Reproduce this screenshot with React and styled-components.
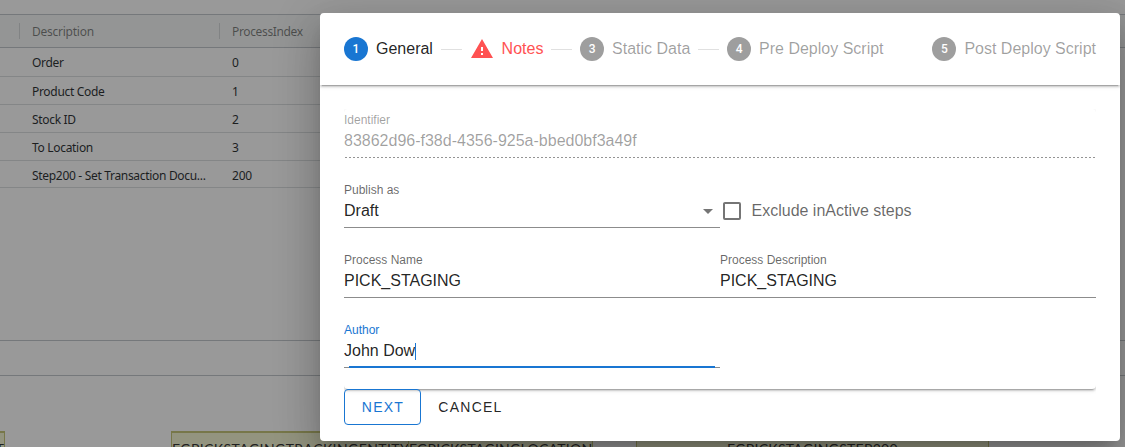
import React from "react";
import styled, { createGlobalStyle } from "styled-components";

const GlobalStyle = createGlobalStyle`
  * { box-sizing: border-box; }
  body { margin: 0; overflow: hidden; background: #fff; font-family: "Liberation Sans", Arial, sans-serif; }
`;

const Page = styled.div`
  position: relative;
  height: 447px;
  overflow: hidden;
  display: flex;
  flex-direction: column;
  background: #fff;
`;

const Grid = styled.section`
  height: 327px;
  margin-top: 14px;
  border: solid #bdc3c7;
  border-width: 1px 0;
  font: 12px/29px "Noto Sans", sans-serif;
  color: #181d1f;
`;

const GridHeader = styled.div`
  display: flex;
  align-items: center;
  height: 33px;
  background: #f5f8f7;
  border-bottom: 1px solid #bdc3c7;
  color: rgba(0, 0, 0, 0.54);
`;

const HeaderCell = styled.div`
  width: ${(p) => p.$width}px;
  height: 16px;
  margin-left: ${(p) => p.$offset || 0}px;
  padding-left: 12px;
  border-left: 1px solid #d3d7d9;
  line-height: 18px;
  letter-spacing: ${(p) => p.$tracking || 0}px;
`;

const GridRow = styled.div`
  display: flex;
  width: 1100px;
  height: ${(p) => p.$height || 28}px;
  padding-left: 32px;
  border-bottom: 1px solid #d9dcde;
`;

const Cell = styled.div`
  width: ${(p) => p.$width}px;
  white-space: nowrap;
  letter-spacing: ${(p) => p.$tracking || 0}px;
`;

const StatusBar = styled.div`
  height: 35px;
  border-bottom: 1px solid #bdc3c7;
`;

const Canvas = styled.div`
  position: relative;
  flex: 1;
`;

const Node = styled.div`
  position: absolute;
  left: ${(p) => p.$left}px;
  top: 55px;
  width: ${(p) => p.$width}px;
  height: 60px;
  padding-top: 7px;
  border: solid #c0c06c;
  border-width: 2px 1px;
  background: #f4f6d0;
  color: #222;
  font: 14px/17px Lato, sans-serif;
  letter-spacing: ${(p) => p.$tracking || 0}px;
  text-align: ${(p) => p.$align || "center"};
  white-space: nowrap;
`;

const Overlay = styled.div`
  position: absolute;
  inset: 0;
  background: rgba(33, 33, 33, 0.46);
`;

const Dialog = styled.main`
  position: absolute;
  left: 320px;
  top: 13px;
  width: 800px;
  height: 428px;
  border-radius: 4px;
  background: #fff;
  box-shadow: 0 11px 15px -7px rgba(0, 0, 0, 0.2), 0 24px 38px 3px rgba(0, 0, 0, 0.14),
    0 9px 46px 8px rgba(0, 0, 0, 0.12);
`;

const HeaderClip = styled.div`
  overflow: hidden;
  height: 80px;
  border-radius: 4px 4px 0 0;
`;

const StepHeader = styled.header`
  display: flex;
  align-items: center;
  height: 72px;
  padding: 0 24px;
  box-shadow: 0 3px 1px -2px rgba(0, 0, 0, 0.2), 0 2px 2px 0 rgba(0, 0, 0, 0.14),
    0 1px 5px 0 rgba(0, 0, 0, 0.12);
`;

const Step = styled.div`
  display: flex;
  align-items: center;
  color: ${(p) => p.$color};
  font-size: 16px;
  line-height: 16px;
  white-space: nowrap;
`;

const StepBadge = styled.span`
  display: flex;
  align-items: center;
  justify-content: center;
  width: 24px;
  height: 24px;
  margin-right: 8px;
  border-radius: 50%;
  background: ${(p) => p.$fill};
  color: #fff;
  font: 500 12px/24px Roboto, sans-serif;
`;

const WarningIcon = styled.svg`
  width: 24px;
  height: 24px;
  margin-right: 8px;
  fill: #ff5252;
`;

const Connector = styled.i`
  flex: ${(p) => (p.$hidden ? "1" : "0 0 20.7px")};
  height: 1px;
  margin: 0 8px;
  background: ${(p) => (p.$hidden ? "transparent" : "rgba(0, 0, 0, 0.12)")};
`;

const FormClip = styled.div`
  height: 296px;
  margin: 16px 24px -16px;
  overflow: hidden;
`;

const FormPanel = styled.form`
  display: grid;
  grid-template-columns: 1fr 1fr;
  grid-auto-rows: 70px;
  height: 280px;
  border-radius: 4px;
  box-shadow: 0 3px 1px -2px rgba(0, 0, 0, 0.2), 0 2px 2px 0 rgba(0, 0, 0, 0.14),
    0 1px 5px 0 rgba(0, 0, 0, 0.12);
`;

const FieldBox = styled.div`
  display: flex;
  flex-direction: column;
  grid-column: ${(p) => (p.$wide ? "1 / -1" : "auto")};
  height: 49px;
  padding-top: 4px;
  border-bottom: 1px solid ${(p) => (p.$disabled ? "transparent" : "#8c8c8c")};
  background: ${(p) =>
    p.$disabled
      ? "repeating-linear-gradient(90deg, transparent 0 1px, #949494 1px 3px, transparent 3px 4px) 0 100% / 100% 1px no-repeat border-box"
      : "none"};
  color: ${(p) => (p.$disabled ? "rgba(0,0,0,.38)" : "rgba(0,0,0,.87)")};
`;

const FieldLabel = styled.label`
  height: 14px;
  font-size: 12px;
  line-height: 14px;
  color: ${(p) => (p.$active ? "#1976d2" : p.$disabled ? "rgba(0,0,0,.38)" : "rgba(0,0,0,.6)")};
`;

const FieldValue = styled.div`
  display: flex;
  align-items: center;
  height: 28px;
  font-size: 16px;
  line-height: 20px;
`;

const Caret = styled.span`
  width: 1px;
  height: 17px;
  background: #1976d2;
`;

const FocusLine = styled.span`
  height: 2px;
  margin: 0 5px;
  background: #1976d2;
  transform: translateY(1px);
`;

const Arrow = styled.svg`
  width: 24px;
  height: 24px;
  margin: 0 0.5px 0 auto;
  fill: #757575;
`;

const CheckOption = styled.label`
  display: flex;
  align-items: center;
  height: 64px;
  margin-left: -0.5px;
  color: rgba(0, 0, 0, 0.6);
  font-size: 16px;
  svg { width: 24px; height: 24px; margin-right: 8px; fill: #757575; }
`;

const Button = styled.button`
  width: ${(p) => p.$width}px;
  height: 36px;
  padding: 0 0 0 1px;
  border: ${(p) => (p.$outlined ? "1px solid #1976d2" : "0")};
  border-radius: 4px;
  background: transparent;
  color: ${(p) => (p.$outlined ? "#1976d2" : "rgba(0,0,0,.87)")};
  font: 14px "Liberation Sans", Arial, sans-serif;
  letter-spacing: 1.25px;
`;

const Actions = styled.footer`
  position: relative;
  display: flex;
  padding: 0 24px;
`;

const steps = [
  { n: 1, label: "General", color: "rgba(0,0,0,.87)", fill: "#1976d2" },
  { n: 2, label: "Notes", color: "#ff5252", warning: true },
  { n: 3, label: "Static Data", color: "rgba(0,0,0,.38)", fill: "#9e9e9e" },
  { n: 4, label: "Pre Deploy Script", color: "rgba(0,0,0,.38)", fill: "#9e9e9e" },
  { n: 5, label: "Post Deploy Script", color: "rgba(0,0,0,.38)", fill: "#9e9e9e" },
];

const rows = [
  ["Order", "0", 29],
  ["Product Code", "1", 28],
  ["Stock ID", "2", 28],
  ["To Location", "3", 28],
  ["Step200 - Set Transaction Docu...", "200", 27],
];

function Field({ label, value, wide, disabled, active, select }) {
  return (
    <FieldBox $wide={wide} $disabled={disabled}>
      <FieldLabel $active={active} $disabled={disabled}>{label}</FieldLabel>
      <FieldValue>
        {value}
        {active && <Caret />}
        {select && <Arrow viewBox="0 0 24 24"><path d="M7 10l5 5 5-5z" /></Arrow>}
      </FieldValue>
      {active && <FocusLine />}
    </FieldBox>
  );
}

export default function App() {
  return (
    <Page>
      <GlobalStyle />
      <Grid>
        <GridHeader>
          <HeaderCell $width={200} $offset={19} $tracking={-0.25}>Description</HeaderCell>
          <HeaderCell $width={200} $tracking={-0.35}>ProcessIndex</HeaderCell>
        </GridHeader>
        {rows.map(([name, index, height]) => (
          <GridRow key={name} $height={height}>
            <Cell $width={200} $tracking={-0.31}>{name}</Cell>
            <Cell $width={100} $tracking={-0.2}>{index}</Cell>
          </GridRow>
        ))}
      </Grid>
      <StatusBar />
      <Canvas>
        <Node $left={-175} $width={180} $align="right">EGPICKSTAGINGPRODUCT</Node>
        <Node $left={171} $width={238} $align="left" $tracking={0.42}>EGPICKSTAGINGTRACKINGENTITY</Node>
        <Node $left={408} $width={185} $align="left" $tracking={0.25}>EGPICKSTAGINGLOCATION</Node>
        <Node $left={636} $width={353} $tracking={0.3}>EGPICKSTAGINGSTEP200</Node>
      </Canvas>
      <Overlay />
      <Dialog>
        <HeaderClip>
          <StepHeader>
            {steps.map((s, i) => (
              <React.Fragment key={s.n}>
                {i > 0 && <Connector $hidden={i === 4} />}
                <Step $color={s.color}>
                  {s.warning ? (
                    <WarningIcon viewBox="0 0 24 24">
                      <path d="M13 14h-2v-4h2m0 8h-2v-2h2M1 21h22L12 2 1 21z" />
                    </WarningIcon>
                  ) : (
                    <StepBadge $fill={s.fill}>{s.n}</StepBadge>
                  )}
                  {s.label}
                </Step>
              </React.Fragment>
            ))}
          </StepHeader>
        </HeaderClip>
        <FormClip>
          <FormPanel>
            <Field label="Identifier" value="83862d96-f38d-4356-925a-bbed0bf3a49f" wide disabled />
            <Field label="Publish as" value="Draft" select />
            <CheckOption>
              <svg viewBox="0 0 24 24">
                <path d="M19 3H5c-1.11 0-2 .89-2 2v14a2 2 0 0 0 2 2h14a2 2 0 0 0 2-2V5a2 2 0 0 0-2-2m0 2v14H5V5h14z" />
              </svg>
              Exclude inActive steps
            </CheckOption>
            <Field label="Process Name" value="PICK_STAGING" />
            <Field label="Process Description" value="PICK_STAGING" />
            <Field label="Author" value="John Dow" active />
          </FormPanel>
        </FormClip>
        <Actions>
          <Button $width={77} $outlined>NEXT</Button>
          <Button $width={98}>CANCEL</Button>
        </Actions>
      </Dialog>
    </Page>
  );
}
